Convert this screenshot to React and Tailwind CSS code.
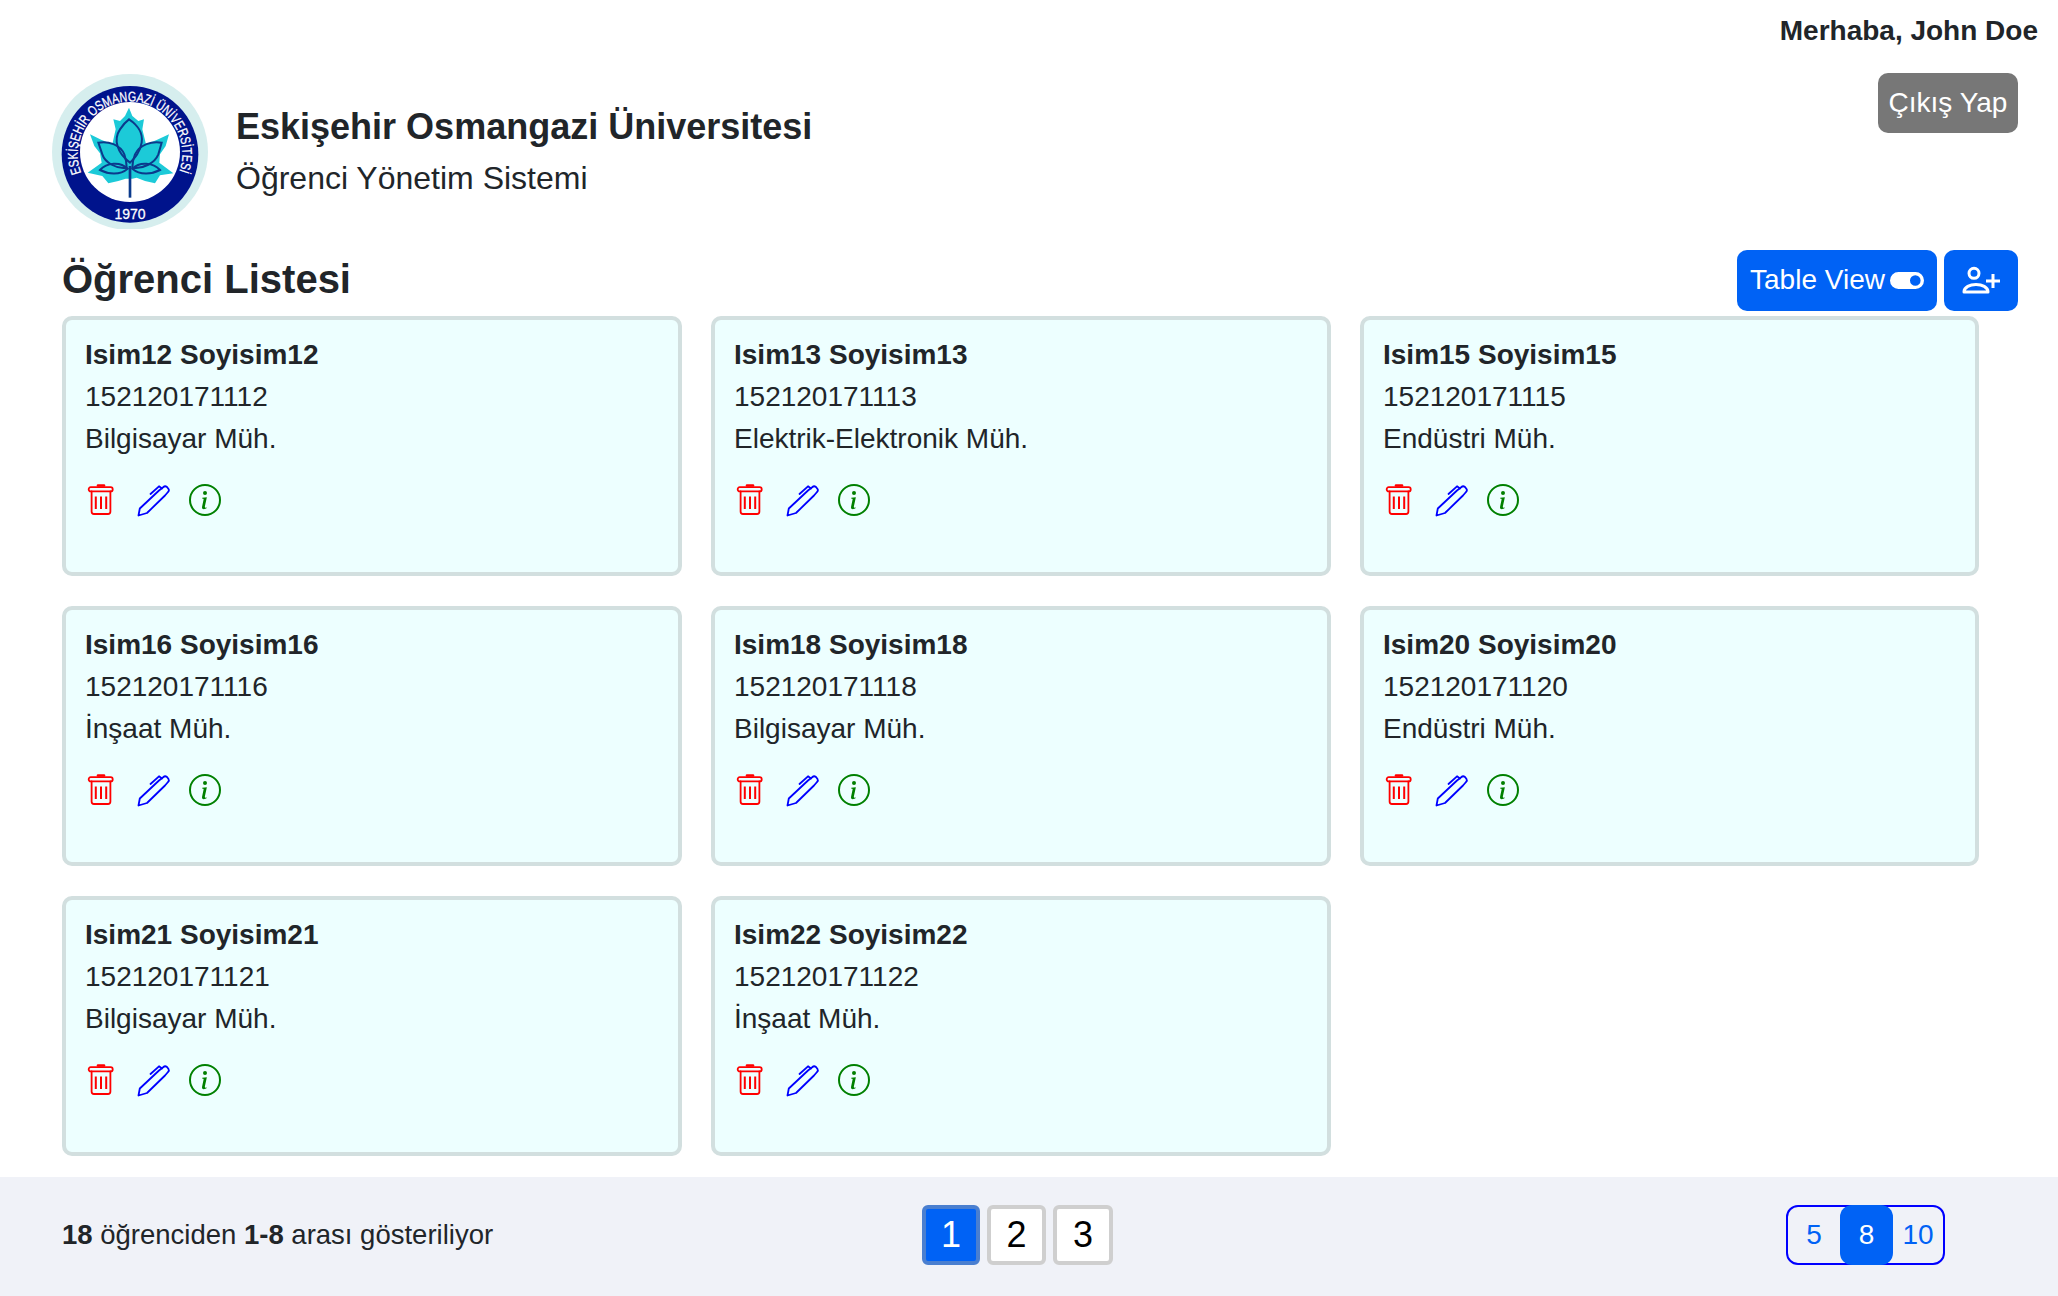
import React from "react";
import { BsInfoCircle } from "react-icons/bs";

const students = [
  ["Isim12 Soyisim12", "152120171112", "Bilgisayar Müh."],
  ["Isim13 Soyisim13", "152120171113", "Elektrik-Elektronik Müh."],
  ["Isim15 Soyisim15", "152120171115", "Endüstri Müh."],
  ["Isim16 Soyisim16", "152120171116", "İnşaat Müh."],
  ["Isim18 Soyisim18", "152120171118", "Bilgisayar Müh."],
  ["Isim20 Soyisim20", "152120171120", "Endüstri Müh."],
  ["Isim21 Soyisim21", "152120171121", "Bilgisayar Müh."],
  ["Isim22 Soyisim22", "152120171122", "İnşaat Müh."],
];

function Logo() {
  return (
    <svg viewBox="21 21 468 468" className="w-[156px] h-[156px] shrink-0">
      <circle cx="255" cy="258" r="234" fill="#d6eeee" />
      <circle cx="255" cy="265" r="205" fill="#00138c" />
      <circle cx="255" cy="258" r="150" fill="#ffffff" />
      <polygon
        fill="#1ccad8"
        points="252,125 262,150 280,165 297,160 292,190 303,235 335,222 372,205 362,240 345,265 343,290 385,322 345,328 330,352 300,345 275,335 262,338 242,338 220,345 190,352 172,330 128,320 170,290 165,262 148,240 135,205 170,222 202,235 212,190 205,160 225,165 240,150"
      />
      <g fill="none" stroke="#0b3a8c" strokeWidth="6">
        <path d="M255 290C215 260 205 220 225 190C235 175 245 165 252 160C275 175 295 200 290 230C285 260 270 275 255 290Z" />
        <path d="M160 230C190 225 225 235 238 265C245 285 245 295 245 305C215 310 180 290 172 265Z" />
        <path d="M350 230C320 225 285 235 270 265C262 285 262 295 262 305C295 310 330 290 340 265Z" />
        <path d="M165 312C185 290 225 285 248 308C225 328 190 325 165 312Z" />
        <path d="M345 312C325 290 285 285 262 308C285 328 320 325 345 312Z" />
        <path d="M255 300V395" strokeWidth="8" />
      </g>
      <path id="logoArc" d="M109 321A157 157 0 1 1 401 321" fill="none" />
      <text fill="#ffffff" stroke="#ffffff" strokeWidth="0.8" fontSize="42" fontFamily="'Liberation Sans', sans-serif">
        <textPath href="#logoArc" textLength="606" lengthAdjust="spacingAndGlyphs">
          ESKİŞEHİR OSMANGAZİ ÜNİVERSİTESİ
        </textPath>
      </text>
      <text x="255" y="458" textAnchor="middle" fill="#ffffff" stroke="#ffffff" strokeWidth="0.8" fontSize="42" fontFamily="'Liberation Sans', sans-serif">
        1970
      </text>
    </svg>
  );
}

function TrashIcon() {
  return (
    <svg viewBox="0 0 40 40" className="w-[40px] h-[40px] shrink-0" fill="none" stroke="#ff0000" strokeWidth="1.8" strokeLinejoin="round" strokeLinecap="round">
      <path d="M14 5.5H20" strokeWidth="2.6" />
      <rect x="4.7" y="7.2" width="24" height="4.2" rx="2" />
      <path d="M7.6 11.5V31.5Q7.6 34 10 34H24Q26.4 34 26.4 31.5V11.5" />
      <path d="M11.8 16.5V29M17 16.5V29M22.2 16.5V29" strokeLinecap="butt" strokeWidth="2" />
    </svg>
  );
}

function PenIcon() {
  return (
    <svg viewBox="0 0 40 40" className="w-[40px] h-[40px] shrink-0" fill="none" stroke="#0000ff" strokeWidth="1.8" strokeLinejoin="round" strokeLinecap="round">
      <path d="M4.5 35.5L5.8 28.5L25 10.5L29.5 7Q31 5.5 33 7L34.5 9Q35.5 10.5 34 12L31 15.5L13 33Z" />
      <path d="M16.5 14L25 6.3L28 8.5" />
    </svg>
  );
}

function UserPlusIcon() {
  return (
    <svg viewBox="0 0 60 50" className="w-[60px] h-[50px]" fill="none" stroke="#ffffff" strokeWidth="3" strokeLinejoin="round">
      <circle cx="24" cy="18.3" r="5" />
      <path d="M14 37C14 32 20 29.5 26 29.5C32 29.5 38 32 38 37Z" />
      <path d="M43 19V33M36 26H50" />
    </svg>
  );
}

function ToggleIcon() {
  return (
    <svg viewBox="0 0 34 17" className="w-[34px] h-[17px] shrink-0">
      <path
        fill="#ffffff"
        fillRule="evenodd"
        d="M8.5 0H25.5A8.5 8.5 0 0 1 25.5 17H8.5A8.5 8.5 0 0 1 8.5 0ZM25.3 3.2A5.3 5.3 0 1 0 25.3 13.8A5.3 5.3 0 1 0 25.3 3.2Z"
      />
    </svg>
  );
}

function Card({ s }) {
  return (
    <div className="h-[260px] rounded-[10px] border-4 border-[#d2dfdf] bg-[#edffff] px-[19px] pt-[14px]">
      <div className="font-bold leading-[42px]">{s[0]}</div>
      <div className="leading-[42px]">{s[1]}</div>
      <div className="leading-[42px]">{s[2]}</div>
      <div className="flex items-center -ml-[1px] mt-[20px]">
        <TrashIcon />
        <div className="ml-[10px]">
          <PenIcon />
        </div>
        <BsInfoCircle className="ml-[15px] w-[32px] h-[32px] text-[#008000]" />
      </div>
    </div>
  );
}

export default function App() {
  return (
    <div className="min-h-screen flex flex-col bg-white text-[#212529] font-['Liberation_Sans',sans-serif] text-[28px]">
      <div className="text-right font-bold leading-[42px] pr-[20px] pt-[10px]">Merhaba, John Doe</div>
      <div className="flex items-start justify-between pl-[52px] pr-[40px] mt-[21px]">
        <div className="flex items-center gap-[28px]">
          <Logo />
          <div>
            <div className="font-bold text-[36px] leading-[52px] pt-[1px]">Eskişehir Osmangazi Üniversitesi</div>
            <div className="text-[32px] leading-[50px]">Öğrenci Yönetim Sistemi</div>
          </div>
        </div>
        <button className="h-[60px] w-[140px] rounded-[10px] bg-[#777777] text-white">Çıkış Yap</button>
      </div>
      <div className="flex items-center justify-between pl-[62px] pr-[40px] mt-[20px]">
        <div className="font-bold text-[40px] leading-[60px] pb-[2px]">Öğrenci Listesi</div>
        <div className="flex gap-[7px]">
          <button className="h-[61px] w-[200px] rounded-[10px] bg-[#0062f5] text-white flex items-center justify-center gap-[5px]">
            Table View
            <ToggleIcon />
          </button>
          <button className="h-[61px] w-[74px] rounded-[10px] bg-[#0062f5] flex items-center justify-center pr-[2px]">
            <UserPlusIcon />
          </button>
        </div>
      </div>
      <div className="ml-[62px] mt-[5px] grid grid-cols-[620px_620px_619px] gap-x-[29px] gap-y-[30px]">
        {students.map((s) => (
          <Card key={s[0]} s={s} />
        ))}
      </div>
      <div className="mt-auto h-[119px] bg-[#f0f2f8] flex items-center pl-[62px] pr-[113px] pb-[3px]">
        <div className="w-[860px] text-[27.5px]">
          <b>18</b> öğrenciden <b>1-8</b> arası gösteriliyor
        </div>
        <div className="flex gap-[7px] text-[36px] text-black">
          <div className="w-[58px] h-[60px] rounded-[6px] border-4 border-[#4a7fd0] bg-[#0062f5] text-white flex items-center justify-center">1</div>
          <div className="w-[59px] h-[60px] rounded-[6px] border-4 border-[#cfcfcf] bg-white flex items-center justify-center">2</div>
          <div className="w-[60px] h-[60px] rounded-[6px] border-4 border-[#cfcfcf] bg-white flex items-center justify-center">3</div>
        </div>
        <div className="ml-auto w-[159px] h-[60px] rounded-[12px] border-2 border-[#0000ff] flex items-center text-[#0062f5]">
          <div className="w-[52px] text-center">5</div>
          <div className="w-[53px] h-[60px] rounded-[12px] bg-[#0062f5] text-white flex items-center justify-center">8</div>
          <div className="w-[50px] text-center">10</div>
        </div>
      </div>
    </div>
  );
}
